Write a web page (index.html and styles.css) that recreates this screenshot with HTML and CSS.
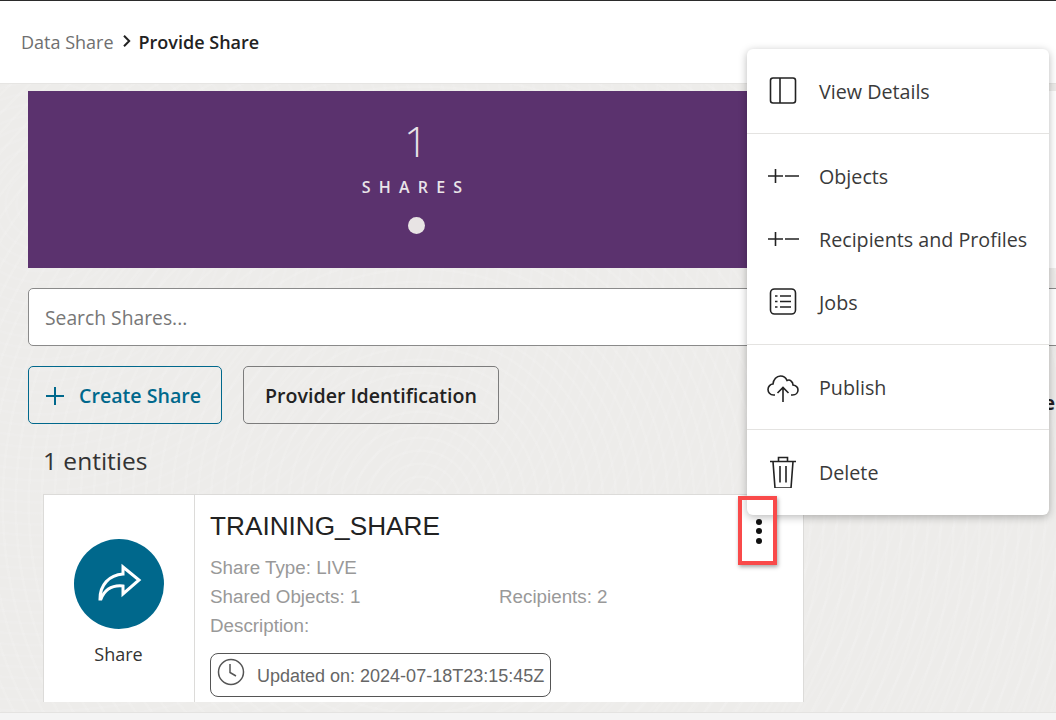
FILE: index.html
```html
<!DOCTYPE html>
<html lang="en">
<head>
<meta charset="utf-8">
<title>Provide Share</title>
<link rel="stylesheet" href="styles.css">
</head>
<body>
<div class="page">
  <header class="topbar">
    <nav class="crumbs">
      <span class="crumb-parent">Data Share</span>
      <svg class="crumb-sep" viewBox="0 0 10 12" width="10" height="12"><path d="M2 .8 7.200 6 2 11.200" fill="none" stroke="#222" stroke-width="2"/></svg>
      <span class="crumb-current">Provide Share</span>
    </nav>
  </header>
  <main class="content">
    <section class="hero">
      <div class="hero-card">
        <div class="hero-count">1</div>
        <div class="hero-label">SHARES</div>
        <div class="hero-dot"></div>
      </div>
      <div class="hero-next"></div>
    </section>
    <div class="search"><span class="search-text">Search Shares...</span></div>
    <div class="toolbar">
      <button class="btn btn-primary">
        <svg viewBox="0 0 18 18" width="18" height="18"><path d="M9 0v18M0 9h18" stroke="#00688c" stroke-width="2" fill="none"/></svg>
        <span>Create Share</span>
      </button>
      <button class="btn">Provider Identification</button>
      <span class="toolbar-clipped">e</span>
    </div>
    <div class="count">1 entities</div>
    <article class="card">
      <div class="card-side">
        <div class="avatar">
          <svg viewBox="0 0 90 90" width="90" height="90"><path d="M26 60C26 46 35 36 49 35V28L65 41 49 55V47C39 46 31 50 27 60Z" fill="none" stroke="#fff" stroke-width="3" stroke-linejoin="miter"/></svg>
        </div>
        <div class="avatar-label">Share</div>
      </div>
      <div class="card-body">
        <h2 class="card-title">TRAINING_SHARE</h2>
        <div class="meta">Share Type: LIVE</div>
        <div class="meta meta-row"><span class="meta-col">Shared Objects: 1</span><span>Recipients: 2</span></div>
        <div class="meta">Description:</div>
        <div class="updated">
          <svg class="updated-icon" viewBox="0 0 28 28" width="28" height="28"><circle cx="14" cy="14" r="12.500" fill="none" stroke="#555" stroke-width="1.500"/><path d="M13 6v8.500l6 3.500" fill="none" stroke="#555" stroke-width="1.500"/></svg>
          <span class="updated-text">Updated on: 2024-07-18T23:15:45Z</span>
        </div>
      </div>
      <div class="kebab"><i></i><i></i><i></i></div>
      <div class="highlight"></div>
    </article>
  </main>
  <footer class="footer"></footer>

  <div class="menu">
    <div class="menu-section">
      <div class="menu-item">
        <svg class="icon" viewBox="0 0 32 32"><rect x="3.500" y="3" width="25" height="25" rx="2.500"/><path d="M13 3v25"/></svg>
        <span>View Details</span>
      </div>
    </div>
    <div class="menu-section">
      <div class="menu-item menu-item-tall">
        <svg class="icon" viewBox="0 0 32 32"><path d="M1 16h15M8.500 9v14M18 16h14"/></svg>
        <span>Objects</span>
      </div>
      <div class="menu-item menu-item-tall">
        <svg class="icon" viewBox="0 0 32 32"><path d="M1 16h15M8.500 9v14M18 16h14"/></svg>
        <span>Recipients and Profiles</span>
      </div>
      <div class="menu-item menu-item-tall">
        <svg class="icon" viewBox="0 0 32 32"><rect x="3.500" y="3" width="25" height="25" rx="4"/><path d="M13 10h11M13 15.500h11M13 21h11M8 10h2.500M8 15.500h2.500M8 21h2.500"/></svg>
        <span>Jobs</span>
      </div>
    </div>
    <div class="menu-section">
      <div class="menu-item">
        <svg class="icon" viewBox="0 0 32 32"><path d="M8 24H6.500C3 24 1 21 1 18.500 1 15.500 3.500 13 6 13 6.500 8.500 9.500 5 13.500 5c3 0 5.500 2 6.500 4.500 1-.5 3-.5 4 .5 1.500 1 2 2.500 2 4 3 .5 5 2.500 5 5 0 2.500-2 5-5.500 5H24"/><path d="M16 31V17M10.500 22 16 16.500 21.500 22"/></svg>
        <span>Publish</span>
      </div>
    </div>
    <div class="menu-section">
      <div class="menu-item">
        <svg class="icon" viewBox="0 0 32 32"><path d="M3 5.500h26M11.500 5.500V1.500h9v4M6 5.500l2 26.500h16l2-26.500M13 10v16.500M19 10v16.500"/></svg>
        <span>Delete</span>
      </div>
    </div>
  </div>
</div>
</body>
</html>
```

FILE: styles.css
```css
* { box-sizing: border-box; }
html, body { margin: 0; height: 100%; overflow: hidden; }
body { font-family: "Open Sans", "Noto Sans", sans-serif; color: #222; background: #edecea; }

.page { position: relative; display: flex; flex-direction: column; width: 1056px; height: 720px; overflow: hidden; }

.topbar { flex: 0 0 84px; display: flex; align-items: center; padding: 0 21px; background: #fff; border-top: 1px solid #2b2b2b; border-bottom: 1px solid #e6e5e3; }
.crumbs { display: flex; align-items: center; gap: 8px; font-size: 18px; }
.crumb-parent { color: #6f6f6f; }
.crumb-sep { margin: 0 -1px 3px 0; }
.crumb-current { font-weight: 600; color: #222; }

.content {
  flex: 1 1 auto; min-height: 0; overflow: hidden; padding: 7px 0 0 28px;
  background-color: #edecea;
  background-image:
    repeating-radial-gradient(circle at 420px 420px, rgba(255,255,255,.1) 0 2px, rgba(255,255,255,0) 3px 13px),
    repeating-radial-gradient(circle at 40px 120px, rgba(255,255,255,.08) 0 2px, rgba(255,255,255,0) 3px 11px);
}

.hero { display: flex; height: 177px; }
.hero-card { flex: 0 0 776px; display: flex; flex-direction: column; align-items: center; background: #5b326e; color: #e8e4e8; }
.hero-next { flex: 1 1 auto; background: #fff; }
.hero-count { margin-top: 23px; font-size: 42px; line-height: 54px; font-weight: 300; }
.hero-label { margin-top: 8px; font-size: 16px; line-height: 22px; font-weight: 600; letter-spacing: 8.200px; }
.hero-dot { width: 17px; height: 17px; margin-top: 19px; border-radius: 50%; background: #e8e4e4; }

.search { width: 1100px; height: 58px; margin-top: 20px; padding: 1px 0 0 16px; display: flex; align-items: center; background: #fff; border: 1px solid #8a8a8a; border-radius: 5px; }
.search-text { font-size: 19.300px; color: #777; }

.toolbar { display: flex; align-items: center; gap: 21px; margin-top: 20px; height: 58px; }
.btn { display: flex; align-items: center; justify-content: center; height: 58px; width: 256px; padding: 1px 0 0; background: transparent; border: 1px solid #7c7c7c; border-radius: 5px; font-family: inherit; font-size: 19.600px; font-weight: 600; color: #222; }
.btn-primary { width: 194px; gap: 15px; justify-content: flex-start; padding-left: 17px; border-color: #00688c; color: #00688c; }
.toolbar-clipped { margin-left: auto; margin-top: 14px; margin-right: 1px; font-size: 20px; font-weight: 700; color: #222; }

.count { margin-top: 20px; padding-left: 15px; font-size: 24.500px; line-height: 34px; color: #333; }

.card { position: relative; display: flex; width: 761px; height: 208px; margin: 16px 0 0 15px; background: #fff; border: 1px solid #dcdbd9; border-bottom: 0; font-family: "Liberation Sans", Arial, sans-serif; }
.card-side { flex: 0 0 151px; display: flex; flex-direction: column; align-items: center; padding: 44px 1px 0 0; border-right: 1px solid #dcdbd9; }
.avatar { width: 90px; height: 90px; border-radius: 50%; background: #00688c; }
.avatar svg { display: block; }
.avatar-label { margin-top: 12px; font-family: "Open Sans", sans-serif; font-size: 18px; line-height: 26px; color: #333; }
.card-body { flex: 1 1 auto; padding: 15px 0 0 15px; }
.card-title { margin: 0 0 11px; font-size: 26.200px; line-height: 32px; font-weight: 400; color: #222; }
.meta { font-size: 18.800px; line-height: 29px; color: #999; }
.meta-row { display: flex; }
.meta-col { width: 289px; }
.updated { display: inline-flex; align-items: center; gap: 12px; width: 341px; height: 44px; margin-top: 13px; padding-left: 6px; border: 1px solid #555; border-radius: 8px; font-size: 18px; color: #666; }
.updated-icon { margin-bottom: 6px; }
.updated-text { margin-top: 2px; }

.kebab { position: absolute; left: 712px; top: 24px; display: flex; flex-direction: column; gap: 3.400px; }
.kebab i { display: block; width: 6px; height: 6px; border-radius: 50%; background: #111; }
.highlight { position: absolute; z-index: 2; left: 694px; top: 1px; width: 39px; height: 69px; border: 4px solid #f94a4a; box-shadow: 1px 2px 4px rgba(0,0,0,.35); }

.footer { flex: 0 0 8px; background: #f4f4f4; border-top: 1px solid #e4e3e1; }

.menu { position: absolute; z-index: 1; left: 747px; top: 49px; width: 302px; height: 466px; background: #fff; border-radius: 6px; box-shadow: 0 2px 8px rgba(0,0,0,.28); font-size: 19.700px; color: #3a3a3a; }
.menu-section { padding: 10px 0; border-bottom: 1px solid #e4e3e1; }
.menu-section:last-child { border-bottom: 0; }
.menu-item { display: flex; align-items: center; gap: 20px; height: 64px; padding-left: 20px; }
.menu-item span { padding-top: 1px; }
.menu-item-tall { height: 63.330px; }
.icon { flex: 0 0 32px; width: 32px; height: 32px; fill: none; stroke: #222; stroke-width: 1.600; }
```
